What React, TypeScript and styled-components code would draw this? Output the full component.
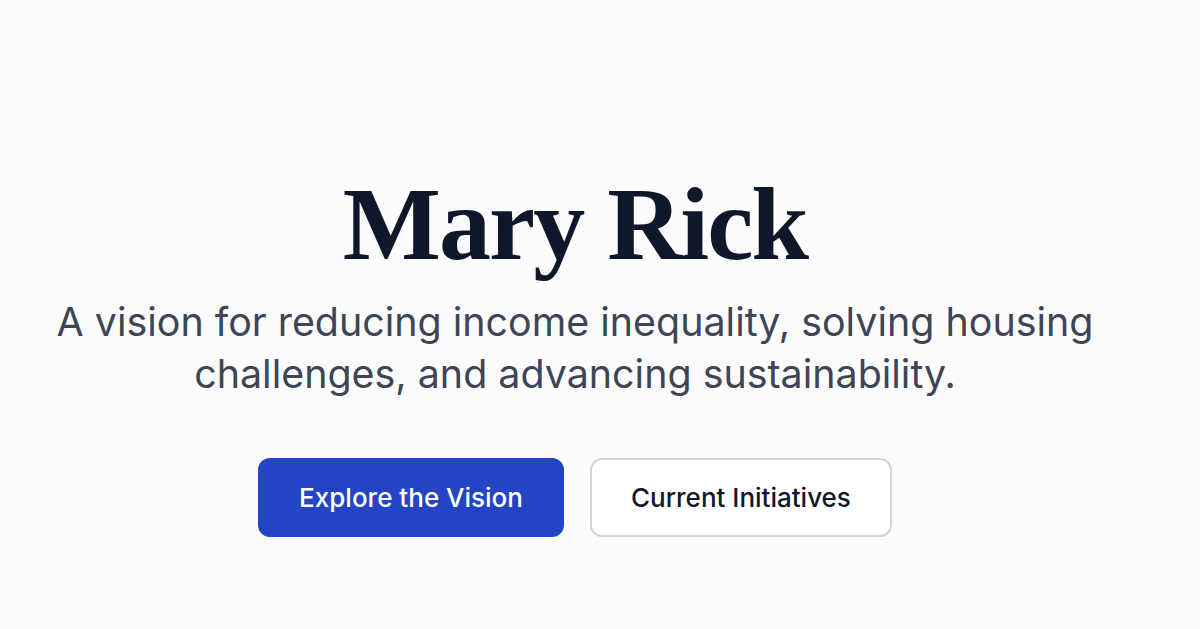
import React from "react";
import styled, { createGlobalStyle } from "styled-components";

const Global = createGlobalStyle`
  html, body { margin: 0; padding: 0; background: #fcfcfc; }
  body { font-family: Inter, "Noto Sans", sans-serif; }
`;

const Page = styled.main`
  width: 1150px;
  height: 629px;
  display: flex;
  flex-direction: column;
  align-items: center;
  padding-top: 162px;
  box-sizing: border-box;
`;

const Title = styled.h1`
  margin: 0;
  font-family: "Liberation Serif", "DejaVu Serif", serif;
  font-weight: 700;
  font-size: 104px;
  line-height: 1.2;
  letter-spacing: -2px;
  color: #0f172a;
`;

const Subtitle = styled.p`
  margin: 9px 0 0;
  max-width: 1120px;
  text-align: center;
  font-size: 39.4px;
  line-height: 52px;
  color: #3d4556;
`;

const Actions = styled.div`
  display: flex;
  gap: 26px;
  margin-top: 58px;
`;

const Button = styled.button<{ $primary?: boolean }>`
  font-family: Inter, sans-serif;
  font-size: 26px;
  font-weight: 500;
  height: 79px;
  padding: 0 39px;
  border-radius: 12px;
  cursor: pointer;
  border: 2px solid ${(p) => (p.$primary ? "#2244c5" : "#d4d4d8")};
  background: ${(p) => (p.$primary ? "#2244c5" : "#ffffff")};
  color: ${(p) => (p.$primary ? "#ffffff" : "#111827")};
`;

export default function App() {
  return (
    <>
      <Global />
      <Page>
        <Title>Mary Rick</Title>
        <Subtitle>
          A vision for reducing income inequality, solving housing challenges, and advancing sustainability.
        </Subtitle>
        <Actions>
          <Button $primary>Explore the Vision</Button>
          <Button>Current Initiatives</Button>
        </Actions>
      </Page>
    </>
  );
}
